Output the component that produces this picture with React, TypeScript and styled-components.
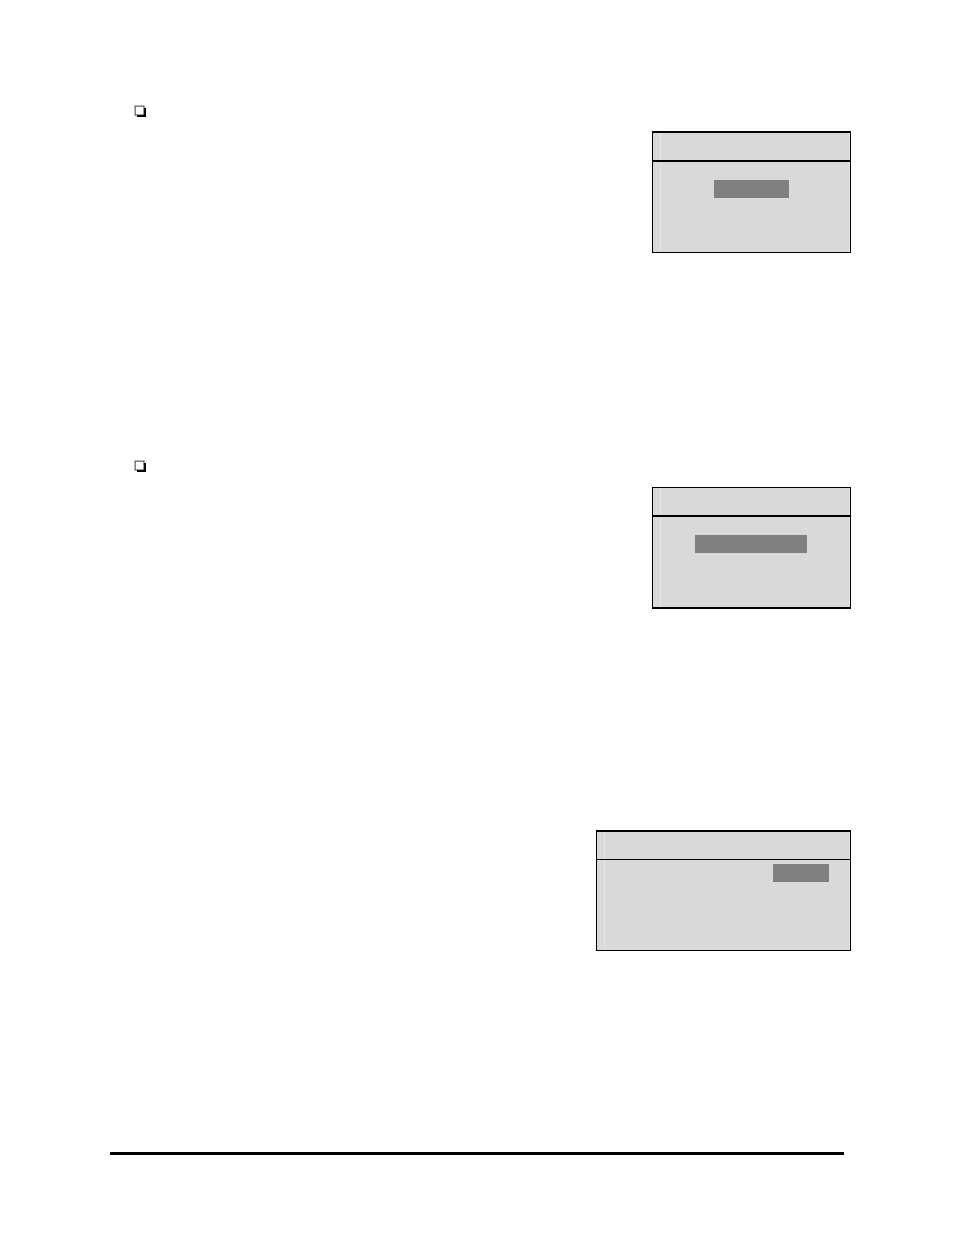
import React from "react";
import styled, { createGlobalStyle } from "styled-components";

const GlobalStyle = createGlobalStyle`
  *, *::before, *::after { box-sizing: border-box; }
  body {
    margin: 0;
    background: #ffffff;
    font-family: "Liberation Sans", Arial, sans-serif;
  }
`;

const Page = styled.main`
  display: flex;
  flex-direction: column;
  padding: 105px 103px 80px 110px;
`;

const Section = styled.section<{ $space: number; $gap: number }>`
  display: flex;
  flex-direction: column;
  gap: ${(p) => p.$gap}px;
  margin-bottom: ${(p) => p.$space}px;
`;

const BulletIcon = styled.svg`
  display: block;
  width: 12px;
  height: 12px;
  margin-left: 24px;
`;

const Screen = styled.div<{ $width: number; $top: number; $bottom: number }>`
  align-self: flex-end;
  width: ${(p) => p.$width}px;
  max-width: 100%;
  border: 1px solid #000000;
  border-top-width: ${(p) => p.$top}px;
  border-bottom-width: ${(p) => p.$bottom}px;
  background: linear-gradient(#e5e5e5, #e5e5e5) 7px 0 / 1px 100% no-repeat,
    linear-gradient(#e5e5e5, #e5e5e5) 100% 0 / 1px 100% no-repeat, #d9d9d9;
`;

const ScreenTitle = styled.header<{ $line: number }>`
  height: ${(p) => 27 + p.$line}px;
  border-bottom: ${(p) => p.$line}px solid #000000;
`;

const ScreenBody = styled.div<{ $top: number; $end?: boolean }>`
  display: flex;
  justify-content: ${(p) => (p.$end ? "flex-end" : "center")};
  height: 90px;
  padding: ${(p) => p.$top}px ${(p) => (p.$end ? 21 : 1)}px 0 0;
`;

const Highlight = styled.div<{ $width: number }>`
  width: ${(p) => p.$width}px;
  height: 18px;
  background: #808080;
`;

const Rule = styled.hr`
  height: 3px;
  margin: 0 7px 0 0;
  border: 0;
  background: #000000;
`;

function Bullet() {
  return (
    <BulletIcon viewBox="0 0 12 12" aria-hidden="true">
      <path d="M3 3h9.3v9H3z" fill="#000000" />
      <rect x="1.1" y="1.1" width="8.9" height="8.9" fill="#ffffff" stroke="#222222" strokeWidth="0.9" />
    </BulletIcon>
  );
}

export default function App() {
  return (
    <>
      <GlobalStyle />
      <Page>
        <Section $gap={14} $space={207}>
          <Bullet />
          <Screen $width={199} $top={2} $bottom={1}>
            <ScreenTitle $line={2} />
            <ScreenBody $top={18}>
              <Highlight $width={75} />
            </ScreenBody>
          </Screen>
        </Section>
        <Section $gap={15} $space={221}>
          <Bullet />
          <Screen $width={199} $top={1} $bottom={2}>
            <ScreenTitle $line={2} />
            <ScreenBody $top={18}>
              <Highlight $width={112} />
            </ScreenBody>
          </Screen>
        </Section>
        <Section $gap={0} $space={201}>
          <Screen $width={255} $top={2} $bottom={1}>
            <ScreenTitle $line={1} />
            <ScreenBody $top={4} $end>
              <Highlight $width={56} />
            </ScreenBody>
          </Screen>
        </Section>
        <Rule />
      </Page>
    </>
  );
}
